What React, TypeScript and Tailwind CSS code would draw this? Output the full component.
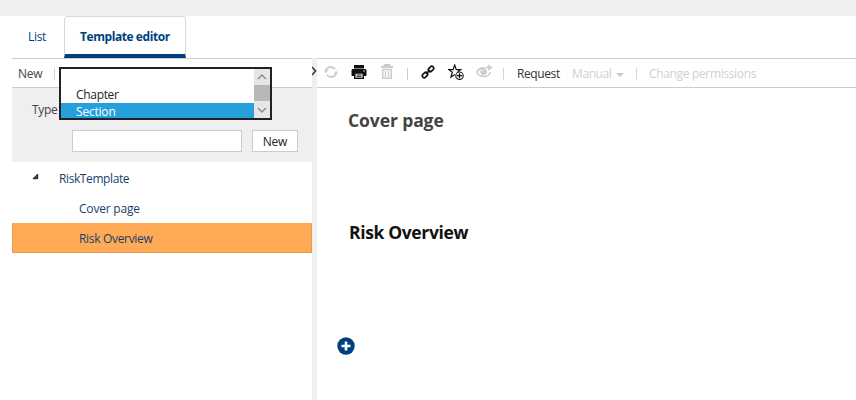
import React from 'react';

const Separator = ({ className = 'bg-[#d5d5d5]' }: { className?: string }) => (
  <span className={`mt-0.5 h-3 w-px shrink-0 ${className}`} />
);

function RefreshIcon() {
  return (
    <svg className="mb-[3px] ml-[7px] h-4 w-[14px] shrink-0" viewBox="0 0 14 16" fill="none" stroke="#cbcbcb" strokeWidth="1.8">
      <path d="M1.8 7.2C2.3 4.8 4.3 3 6.8 3c1.800 0 3.400.9 4.300 2.300M12.200 8.800c-.5 2.400-2.500 4.200-5 4.200-1.800 0-3.400-.9-4.300-2.300" />
      <path d="M0 6.200h4.200L1.900 9.400zM14 9.800H9.800L12.100 6.600z" fill="#cbcbcb" stroke="none" />
    </svg>
  );
}

function PrintIcon() {
  return (
    <svg className="mb-[3px] ml-[13px] h-4 w-4 shrink-0" viewBox="0 0 16 16" fill="#111">
      <path d="M3 1h10v3.500H3zM2 5h12c1 0 1.500.6 1.500 1.500V11c0 .6-.4 1-1 1H13V9H3v3H1.500c-.6 0-1-.4-1-1V6.500C.5 5.600 1 5 2 5z" />
      <path fillRule="evenodd" d="M3 8.500h10V15H3zM4.500 9.800v4h7v-4z" />
      <path d="M5.500 10.500h5v1h-5zM5.500 12.200h5v1h-5z" />
      <circle cx="13" cy="7" r=".7" fill="#fff" />
    </svg>
  );
}

function TrashIcon() {
  return (
    <svg className="mb-0.5 ml-[14px] h-4 w-3 shrink-0" viewBox="0 0 12 16" fill="none" stroke="#cbcbcb">
      <path d="M0 3h12M3.500 3V1h5v2" strokeWidth="1.800" />
      <path d="M1.700 5v9.200h8.600V5M1.700 5.500h8.600" strokeWidth="1.500" />
      <path d="M4.500 7v6M7.500 7v6" strokeWidth="1.300" />
    </svg>
  );
}

function LinkIcon() {
  return (
    <svg className="mb-[3px] ml-[13px] h-4 w-[14px] shrink-0" viewBox="0 0 14 16" fill="none" stroke="#111" strokeWidth="1.600">
      <rect x="-3" y="-1.900" width="6" height="3.800" rx="1.900" transform="translate(4 11) rotate(-45)" />
      <rect x="-3" y="-1.900" width="6" height="3.800" rx="1.900" transform="translate(10 5) rotate(-45)" />
      <path d="M5 10l4-4" />
    </svg>
  );
}

function StarAddIcon() {
  return (
    <svg className="mb-[3px] ml-[13px] h-4 w-4 shrink-0" viewBox="0 0 16 16" fill="none" stroke="#111">
      <path d="M6.800 10.400L3 13l1.300-4.800L.8 5.700h4.300L6.700 1l1.600 4.700h4.300L9.700 7.800" strokeWidth="1.200" />
      <circle cx="11.500" cy="11.700" r="3.700" strokeWidth="1.100" />
      <path d="M9 11.700h5M11.500 9.200v5" strokeWidth="1.300" />
    </svg>
  );
}

function EyeAddIcon() {
  return (
    <svg className="mb-[3px] ml-3 h-4 w-4 shrink-0" viewBox="0 0 16 16" fill="none" stroke="#cbcbcb">
      <path d="M9.500 4.200C5.500 3.200 2.300 5.200.8 8.200c2.500 5.400 10.800 6.200 13.700 0" strokeWidth="1.500" />
      <circle cx="7.600" cy="7.800" r="2.900" fill="#cbcbcb" />
      <path d="M6 7.500c0-.9.600-1.500 1.500-1.500" stroke="#fff" strokeWidth=".9" />
      <path d="M10.400 3.500H16M13.200.7v5.600" strokeWidth="1.900" />
    </svg>
  );
}

function TabBar() {
  return (
    <div className="ml-3 flex h-[43px] border-b border-[#ccc] text-[#003f7d]">
      <div className="w-[52px] pl-4 pt-[12px] leading-[18px]">List</div>
      <div className="h-[42px] w-[122px] rounded-t-[4px] border border-b-4 border-[#d9d9d9] border-b-[#003f7d] pl-[15px] pt-[11px] font-bold leading-[18px] tracking-[-0.43px]">
        Template editor
      </div>
    </div>
  );
}

function TypeList() {
  return (
    <div className="absolute left-[47px] top-[8px] flex h-[53px] w-[213px] border-2 border-[#202124] bg-white text-[#222]">
      <div className="flex-1">
        <div className="h-[17px]" />
        <div className="h-[17px] pl-[15px] leading-[18px]">Chapter</div>
        <div className="h-[15px] bg-[#26a0da] pl-[15px] leading-[17px] tracking-[-0.2px] text-white">Section</div>
      </div>
      <div className="flex w-4 flex-col bg-[#e6e6e6]">
        <svg className="h-4 w-4" viewBox="0 0 16 16" fill="none" stroke="#888" strokeWidth="1.400"><path d="M4 10l4-4 4 4" /></svg>
        <div className="h-4 bg-[#b8b8b8]" />
        <svg className="h-4 w-4" viewBox="0 0 16 16" fill="none" stroke="#888" strokeWidth="1.400"><path d="M4 7l4 4 4-4" /></svg>
      </div>
    </div>
  );
}

function Sidebar() {
  return (
    <div className="relative ml-3 w-[300px] shrink-0">
      <div className="flex h-[29px] items-center border-b border-[#ccc] pl-1.5 text-[#444]">
        <span className="w-9 pt-0.5">New</span>
        <Separator />
      </div>
      <div className="h-[74px] bg-[#efefef] pl-5 pt-[13px] text-[#444]">
        <div className="h-[29px] leading-[18px]">Type</div>
        <div className="flex gap-2.5 pl-10">
          <input className="h-[22px] w-[170px] border border-[#ccc] bg-white" />
          <button className="h-[22px] w-[46px] border border-[#ccc] bg-white pt-px leading-[20px] tracking-[-0.2px] text-[#222]">New</button>
        </div>
      </div>
      <div className="pt-px text-[#173f6d]">
        <div className="flex h-[30px] items-center pl-5">
          <svg className="mb-[4px] mr-[20px] h-[7px] w-[7px]" viewBox="0 0 7 7"><path d="M5.700 1V5.700H1z" fill="#444" stroke="#222" /></svg>
          <span className="pt-0.5 tracking-[-0.4px]">RiskTemplate</span>
        </div>
        <div className="flex h-[30px] items-center pl-[67px] pt-0.5 tracking-[-0.2px]">Cover page</div>
        <div className="flex h-[30px] items-center border border-t-0 border-[#e69a4c] bg-[#ffaa55] pl-[66px] pt-0.5">Risk Overview</div>
      </div>
      <TypeList />
    </div>
  );
}

function Editor() {
  return (
    <main className="min-w-0 flex-1">
      <div className="flex h-[29px] items-center border-b border-[#ccc] text-[#d0d0d0]">
        <RefreshIcon />
        <PrintIcon />
        <TrashIcon />
        <Separator className="ml-[14px] bg-[#b9d8c0]" />
        <LinkIcon />
        <StarAddIcon />
        <EyeAddIcon />
        <Separator className="ml-[11px] bg-[#d5d5d5]" />
        <span className="ml-[13px] w-[55px] pt-0.5 tracking-[-0.4px] text-[#333]">Request</span>
        <span className="w-[44px] pt-0.5 tracking-[-0.4px]">Manual</span>
        <svg className="mt-1 h-1 w-2" viewBox="0 0 8 4" fill="#cbcbcb"><path d="M0 0h8L4 4z" /></svg>
        <Separator className="ml-[12px] bg-[#d5d5d5]" />
        <span className="ml-3 whitespace-nowrap pt-0.5 tracking-[-0.34px]">Change permissions</span>
      </div>
      <h1 className="ml-[31px] mt-5 text-[17.500px] font-bold leading-6 tracking-[-0.1px] text-[#444]">Cover page</h1>
      <h1 className="ml-8 mt-[88px] text-[17.500px] font-bold leading-6 tracking-[-0.36px] text-[#111]">Risk Overview</h1>
      <svg className="ml-5 mt-[93px] h-[18px] w-[18px]" viewBox="0 0 18 18">
        <circle cx="9" cy="9" r="8.700" fill="#003f7d" />
        <path d="M4.500 9h9M9 4.500v9" stroke="#fff" strokeWidth="2.600" />
      </svg>
    </main>
  );
}

export default function App() {
  return (
    <div className="h-[400px] w-[856px] overflow-hidden bg-white font-['Open_Sans','Noto_Sans',sans-serif] text-[12px] tracking-[-0.32px]">
      <div className="h-4 bg-[#efefef]" />
      <TabBar />
      <div className="flex h-[341px]">
        <Sidebar />
        <div className="-mt-px w-[5px] shrink-0 bg-[#efefef]">
          <svg className="mt-[8px] h-[10px] w-[5px]" viewBox="0 0 5 10" fill="none" stroke="#444" strokeWidth="1.800"><path d="M0 1l3.500 4L0 9" /></svg>
        </div>
        <Editor />
      </div>
    </div>
  );
}
